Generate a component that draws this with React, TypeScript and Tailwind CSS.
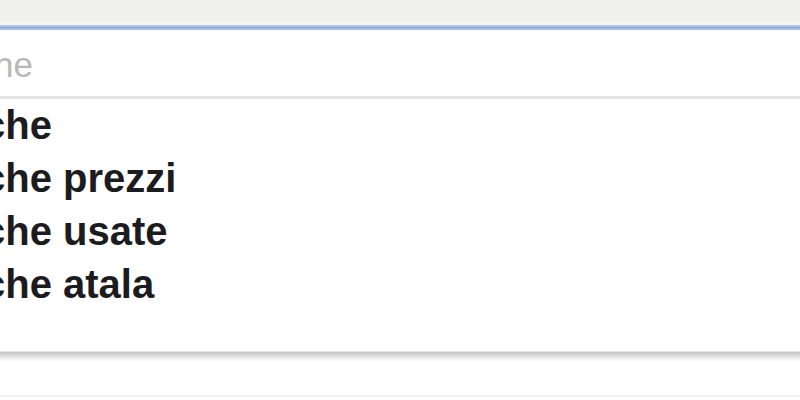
export default function App() {
  const suggestions = ["che", "che prezzi", "che usate", "che atala"];

  return (
    <div className="w-[800px] h-[400px] overflow-hidden bg-white font-['Liberation_Sans',Arial,sans-serif]">
      {/* Browser / page chrome above the search box */}
      <div className="h-[22px] bg-[#f0f0ef]" />
      <div className="h-[3px] bg-[#f6f4ec]" />
      {/* Focused input border */}
      <div className="h-[5px] bg-gradient-to-b from-[#c3d4ee] via-[#8aaddf] to-[#b3c9ec]" />

      {/* Search input */}
      <div className="h-[66px] pt-[4px] overflow-hidden">
        <div className="ml-[-6px] text-[35px] leading-[62px] text-[#b8b8b8] whitespace-nowrap">he</div>
      </div>
      <div className="h-[3px] bg-[#e2e2e2]" />

      {/* Suggestions */}
      <ul className="h-[252px]">
        {suggestions.map((s) => (
          <li key={s} className="h-[53px] ml-[-17px] text-[40px] leading-[53px] font-bold text-[#1c1c20] whitespace-nowrap">
            {s}
          </li>
        ))}
      </ul>

      {/* Dropdown bottom shadow */}
      <div className="h-[1px] bg-[#e6e6e6]" />
      <div className="h-[9px] bg-gradient-to-b from-[#c4c4c4] to-white" />
      <div className="h-[34px]" />
      <div className="h-[2px] bg-[#f2f2f2]" />
    </div>
  );
}
